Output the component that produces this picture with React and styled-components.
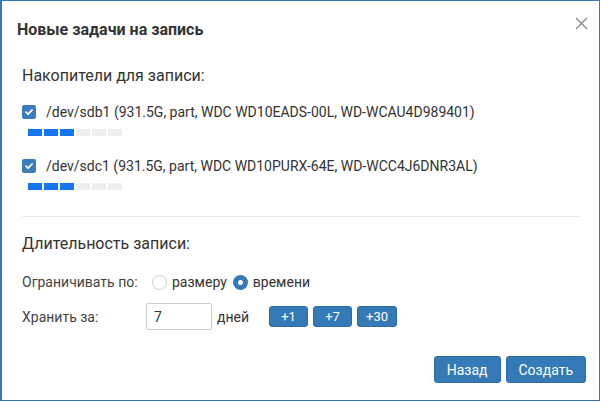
import React, { useState } from 'react';
import styled, { createGlobalStyle } from 'styled-components';

const GlobalStyle = createGlobalStyle`
  html, body {
    margin: 0;
    padding: 0;
    background: #fff;
  }
  body {
    font-family: Roboto, "Liberation Sans", Arial, sans-serif;
    color: #333;
  }
`;

const Dialog = styled.div`
  box-sizing: border-box;
  width: 600px;
  height: 401px;
  border: 1px solid #337ab7;
  border-left-width: 2px;
  background: #fff;
  display: flex;
  flex-direction: column;
`;

const Header = styled.div`
  display: flex;
  justify-content: space-between;
  align-items: flex-start;
  padding: 0 10px 0 15px;
`;

const Title = styled.h4`
  margin: 18px 0 0;
  font-size: 16px;
  line-height: 22px;
  font-weight: 700;
  color: #333;
`;

const CloseButton = styled.button`
  margin-top: 14px;
  width: 16px;
  height: 16px;
  padding: 0;
  border: 0;
  background: none;
  color: #8a8a8a;
  display: flex;
  align-items: center;
  justify-content: center;
  cursor: pointer;
`;

const Body = styled.div`
  padding: 0 19px 0 20px;
  display: flex;
  flex-direction: column;
`;

const SectionTitle = styled.div`
  margin-top: ${p => p.$top}px;
  font-size: 16px;
  line-height: 22px;
  color: #333;
`;

const DriveList = styled.div`
  display: flex;
  flex-direction: column;
  gap: 20px;
  margin-top: 15px;
`;

const Drive = styled.div`
  display: flex;
  flex-direction: column;
  gap: 7px;
`;

const CheckRow = styled.label`
  display: flex;
  align-items: center;
  gap: 10px;
  height: 20px;
  font-size: 14px;
  color: #333;
  cursor: pointer;
`;

const CheckBox = styled.span`
  width: 14px;
  height: 14px;
  border-radius: 2px;
  background: ${p => (p.$checked ? '#3a7cbd' : '#fff')};
  border: ${p => (p.$checked ? '0' : '1px solid #ccc')};
  display: flex;
  align-items: center;
  justify-content: center;
  flex-shrink: 0;
`;

const Bars = styled.div`
  display: flex;
  gap: 2px;
  padding-left: 6px;
`;

const Bar = styled.span`
  width: 14px;
  height: 7px;
  background: ${p => (p.$on ? '#1577f0' : '#eeeeee')};
`;

const Divider = styled.hr`
  margin: 26px 0 0;
  border: 0;
  border-top: 1px solid #eaeaea;
`;

const FormRow = styled.div`
  display: flex;
  align-items: center;
  margin-top: ${p => p.$top}px;
  min-height: 20px;
  font-size: 14px;
`;

const Label = styled.span`
  width: 124px;
  flex-shrink: 0;
  color: #444;
`;

const RadioLabel = styled.label`
  display: flex;
  align-items: center;
  gap: 5px;
  margin-left: ${p => p.$left}px;
  color: #333;
  cursor: pointer;
`;

const RadioDot = styled.span`
  box-sizing: border-box;
  width: 15px;
  height: 15px;
  border-radius: 50%;
  border: ${p => (p.$checked ? '0' : '1px solid #cfcfcf')};
  background: ${p => (p.$checked ? '#337ab7' : '#fff')};
  display: flex;
  align-items: center;
  justify-content: center;

  &::after {
    content: '';
    display: ${p => (p.$checked ? 'block' : 'none')};
    width: 5px;
    height: 5px;
    border-radius: 50%;
    background: #fff;
  }
`;

const NumberInput = styled.input`
  box-sizing: border-box;
  width: 66px;
  height: 27px;
  margin-left: 0;
  padding: 0 7px;
  border: 1px solid #ccc;
  border-radius: 2px;
  font-family: inherit;
  font-size: 14px;
  color: #333;
  outline: none;
`;

const Unit = styled.span`
  margin-left: 5px;
  color: #333;
`;

const SmallButtons = styled.div`
  display: flex;
  gap: 5px;
  margin-left: 20px;
`;

const Button = styled.button`
  box-sizing: border-box;
  height: ${p => (p.$small ? 21 : 27)}px;
  min-width: ${p => (p.$small ? 39 : 0)}px;
  padding: ${p => (p.$small ? '0 8px' : '0 12px')};
  border: 1px solid #2e6da4;
  border-radius: 3px;
  background: #337ab7;
  color: #fff;
  font-family: inherit;
  font-size: ${p => (p.$small ? 13 : 14)}px;
  cursor: pointer;
`;

const Footer = styled.div`
  display: flex;
  justify-content: flex-end;
  gap: 5px;
  margin-top: 26px;
  padding-right: 13px;
`;

const drives = [
  { dev: '/dev/sdb1', info: '931.5G, part, WDC WD10EADS-00L, WD-WCAU4D989401' },
  { dev: '/dev/sdc1', info: '931.5G, part, WDC WD10PURX-64E, WD-WCC4J6DNR3AL' },
];

const CheckIcon = () => (
  <svg width="10" height="10" viewBox="0 0 10 10" fill="none" stroke="#fff" strokeWidth="1.8" strokeLinecap="round" strokeLinejoin="round">
    <path d="M2 5.2 L4.2 7.2 L8 3" />
  </svg>
);

export default function App() {
  const [days, setDays] = useState(7);
  const [limit, setLimit] = useState('time');

  return (
    <>
      <GlobalStyle />
      <Dialog>
        <Header>
          <Title>Новые задачи на запись</Title>
          <CloseButton aria-label="Закрыть">
            <svg width="13" height="13" viewBox="0 0 13 13" stroke="currentColor" strokeWidth="1.4">
              <path d="M1 1 L12 12 M12 1 L1 12" />
            </svg>
          </CloseButton>
        </Header>
        <Body>
          <SectionTitle $top={24}>Накопители для записи:</SectionTitle>
          <DriveList>
            {drives.map(d => (
              <Drive key={d.dev}>
                <CheckRow>
                  <CheckBox $checked>
                    <CheckIcon />
                  </CheckBox>
                  {d.dev} ({d.info})
                </CheckRow>
                <Bars>
                  {[0, 1, 2, 3, 4, 5].map(i => (
                    <Bar key={i} $on={i < 3} />
                  ))}
                </Bars>
              </Drive>
            ))}
          </DriveList>
          <Divider />
          <SectionTitle $top={16}>Длительность записи:</SectionTitle>
          <FormRow $top={17}>
            <Label>Ограничивать по:</Label>
            <RadioLabel $left={6} onClick={() => setLimit('size')}>
              <RadioDot $checked={limit === 'size'} />
              размеру
            </RadioLabel>
            <RadioLabel $left={6} onClick={() => setLimit('time')}>
              <RadioDot $checked={limit === 'time'} />
              времени
            </RadioLabel>
          </FormRow>
          <FormRow $top={11}>
            <Label>Хранить за:</Label>
            <NumberInput value={days} onChange={e => setDays(e.target.value)} />
            <Unit>дней</Unit>
            <SmallButtons>
              {[1, 7, 30].map(n => (
                <Button key={n} $small onClick={() => setDays(Number(days) + n)}>
                  +{n}
                </Button>
              ))}
            </SmallButtons>
          </FormRow>
        </Body>
        <Footer>
          <Button>Назад</Button>
          <Button>Создать</Button>
        </Footer>
      </Dialog>
    </>
  );
}
